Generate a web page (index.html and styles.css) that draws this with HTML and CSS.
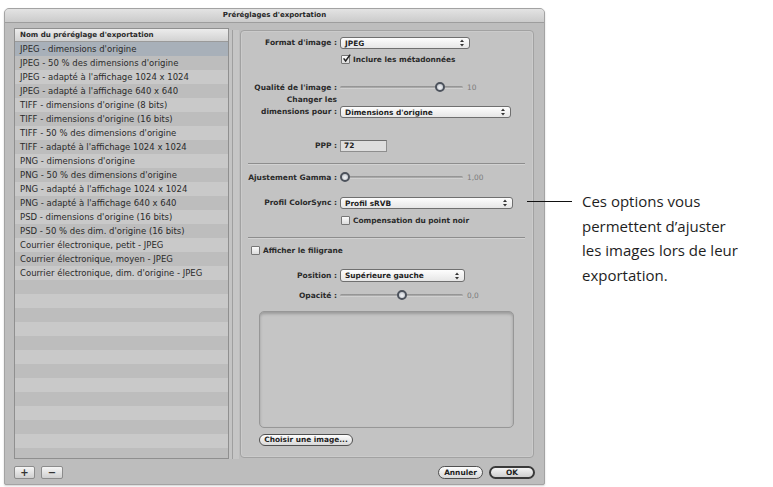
FILE: index.html
```html
<!DOCTYPE html>
<html lang="fr">
<head>
<meta charset="utf-8">
<title>Préréglages d'exportation</title>
<link rel="stylesheet" href="styles.css">
</head>
<body>
<div class="page">
  <div class="window">
    <div class="titlebar">Préréglages d'exportation</div>
    <div class="content">
      <div class="list">
        <div class="list-head">Nom du préréglage d'exportation</div>
        <div class="item sel">JPEG - dimensions d'origine</div>
        <div class="item">JPEG - 50 % des dimensions d'origine</div>
        <div class="item">JPEG - adapté à l'affichage 1024 x 1024</div>
        <div class="item">JPEG - adapté à l'affichage 640 x 640</div>
        <div class="item">TIFF - dimensions d'origine (8 bits)</div>
        <div class="item">TIFF - dimensions d'origine (16 bits)</div>
        <div class="item">TIFF - 50 % des dimensions d'origine</div>
        <div class="item">TIFF - adapté à l'affichage 1024 x 1024</div>
        <div class="item">PNG - dimensions d'origine</div>
        <div class="item">PNG - 50 % des dimensions d'origine</div>
        <div class="item">PNG - adapté à l'affichage 1024 x 1024</div>
        <div class="item">PNG - adapté à l'affichage 640 x 640</div>
        <div class="item">PSD - dimensions d'origine (16 bits)</div>
        <div class="item">PSD - 50 % des dim. d'origine (16 bits)</div>
        <div class="item">Courrier électronique, petit - JPEG</div>
        <div class="item">Courrier électronique, moyen - JPEG</div>
        <div class="item">Courrier électronique, dim. d'origine - JPEG</div>
        <div class="item"></div><div class="item"></div><div class="item"></div>
        <div class="item"></div><div class="item"></div><div class="item"></div>
        <div class="item"></div><div class="item"></div><div class="item"></div>
        <div class="item"></div><div class="item"></div><div class="item"></div>
        <div class="item"></div>
      </div>
      <div class="divider"></div>
      <div class="panel">
        <div class="frow r-format">
          <span class="lbl">Format d'image :</span>
          <div class="popup w-format"><span>JPEG</span><svg class="arrows" viewBox="0 0 4 8" width="4" height="8"><polygon points="0,3 2,0.6 4,3"/><polygon points="0,5 2,7.4 4,5"/></svg></div>
        </div>
        <div class="crow r-meta">
          <span class="cb"><svg viewBox="0 0 9 9" width="9" height="9"><path d="M1.6 4.4 L3.6 7 L8.2 0.6" /></svg></span>
          <span class="ctext">Inclure les métadonnées</span>
        </div>
        <div class="frow r-quality">
          <span class="lbl">Qualité de l'image :</span>
          <div class="slider"><div class="track"></div><div class="knob" style="left:100px"></div></div>
          <span class="val">10</span>
        </div>
        <div class="frow r-size">
          <span class="lbl two">Changer les<br>dimensions pour :</span>
          <div class="popup w-wide"><span>Dimensions d'origine</span><svg class="arrows" viewBox="0 0 4 8" width="4" height="8"><polygon points="0,3 2,0.6 4,3"/><polygon points="0,5 2,7.4 4,5"/></svg></div>
        </div>
        <div class="frow r-ppp">
          <span class="lbl">PPP :</span>
          <div class="field">72</div>
        </div>
        <div class="sep s1"></div>
        <div class="frow r-gamma">
          <span class="lbl">Ajustement Gamma :</span>
          <div class="slider"><div class="track"></div><div class="knob" style="left:5px"></div></div>
          <span class="val">1,00</span>
        </div>
        <div class="frow r-profile">
          <span class="lbl">Profil ColorSync :</span>
          <div class="popup w-wide2"><span>Profil sRVB</span><svg class="arrows" viewBox="0 0 4 8" width="4" height="8"><polygon points="0,3 2,0.6 4,3"/><polygon points="0,5 2,7.4 4,5"/></svg></div>
        </div>
        <div class="crow r-comp">
          <span class="cb"></span>
          <span class="ctext">Compensation du point noir</span>
        </div>
        <div class="sep s2"></div>
        <div class="crow r-wm">
          <span class="cb"></span>
          <span class="ctext">Afficher le filigrane</span>
        </div>
        <div class="frow r-pos">
          <span class="lbl">Position :</span>
          <div class="popup w-pos"><span>Supérieure gauche</span><svg class="arrows" viewBox="0 0 4 8" width="4" height="8"><polygon points="0,3 2,0.6 4,3"/><polygon points="0,5 2,7.4 4,5"/></svg></div>
        </div>
        <div class="frow r-opa">
          <span class="lbl">Opacité :</span>
          <div class="slider"><div class="track"></div><div class="knob" style="left:62px"></div></div>
          <span class="val">0,0</span>
        </div>
        <div class="well"></div>
        <div class="btn b-choose">Choisir une image...</div>
      </div>
    </div>
    <div class="footer">
      <div class="pm">
        <div class="sq">+</div>
        <div class="sq">−</div>
      </div>
      <div class="actions">
        <div class="btn b-cancel">Annuler</div>
        <div class="btn b-ok">OK</div>
      </div>
    </div>
  </div>
  <div class="callout">Ces options vous<br>permettent d’ajuster<br>les images lors de leur<br>exportation.</div>
</div>
</body>
</html>
```

FILE: styles.css
```css
* { box-sizing: border-box; }
html, body { margin: 0; padding: 0; }
body {
  width: 773px; height: 487px; overflow: hidden;
  background: #ffffff;
  font-family: "DejaVu Sans", "Noto Sans", sans-serif;
  color: #1f1f1f;
}
.page { display: flex; align-items: flex-start; }

.window {
  margin: 8px 0 0 4px;
  width: 541px; height: 477px;
  background: #bdbdbd;
  border: 1px solid #a3a3a3;
  border-radius: 5px 5px 2px 2px;
  display: flex; flex-direction: column;
  box-shadow: 0 1px 2px rgba(0,0,0,0.18);
}
.titlebar {
  height: 14px; flex: none;
  background: linear-gradient(#e3e3e3, #cbcbcb);
  border-bottom: 1px solid #9d9d9d;
  border-radius: 4px 4px 0 0;
  text-align: center;
  font-weight: bold; font-size: 7px; line-height: 13px;
  color: #262626;
}
.content {
  display: flex; flex: none;
  padding: 5px 10px 0 9px;
  height: 436px;
}

/* list */
.list {
  width: 215px; height: 431px; flex: none;
  border: 1px solid #8f8f8f;
  background: #c9c9c9;
  overflow: hidden;
}
.list-head {
  height: 13px;
  background: linear-gradient(#ececec, #d2d2d2);
  border-bottom: 1px solid #9a9a9a;
  font-weight: bold; font-size: 7.1px; line-height: 12px;
  padding-left: 5px;
  color: #2a2a2a;
}
.item {
  height: 14px; line-height: 14px;
  padding-left: 5px;
  font-size: 8.5px;
  white-space: nowrap;
  background: #c9c9c9;
  color: #2b2b2b;
}
.item:nth-child(odd) { background: #bdbdbd; }
.item.sel { background: #a8b0b9; }

.divider {
  width: 11px; flex: none;
  margin-top: 2px; height: 429px;
  background: linear-gradient(to right, #c4c4c4 0, #c4c4c4 3px, #9f9f9f 3px, #9f9f9f 4px, #c6c6c6 4px, #c6c6c6 10px, #bdbdbd 10px);
}

/* panel */
.panel {
  width: 294px; height: 428px; flex: none;
  margin-top: 2px;
  border: 1px solid #a2a2a2;
  border-radius: 4px;
  background: #c3c3c3;
  box-shadow: inset 0 0 0 1px #cbcbcb;
  padding-top: 6px;
  display: flex; flex-direction: column;
}
.frow { display: flex; align-items: center; flex: none; }
.crow { display: flex; align-items: center; flex: none; padding-left: 100px; }
.lbl {
  width: 96px; flex: none; text-align: right;
  font-weight: bold; font-size: 7.5px; line-height: 12px;
  color: #2a2a2a; white-space: nowrap;
}
.ctext { font-weight: bold; font-size: 7.4px; margin-left: 3px; color: #2a2a2a; white-space: nowrap; }

.popup {
  margin-left: 3px; height: 12px;
  border: 1px solid #6f6f6f;
  border-radius: 3px;
  background: linear-gradient(#fdfdfd, #e6e6e6);
  display: flex; align-items: center; justify-content: space-between;
  padding: 0 5px 0 4px;
  font-weight: bold; font-size: 7.4px;
  color: #222;
}
.arrows { fill: #333; display: block; }
.w-format { width: 130px; }
.w-wide { width: 171px; }
.w-wide2 { width: 173px; }
.w-pos { width: 125px; }

.cb {
  width: 9px; height: 9px; flex: none;
  border: 1px solid #767676;
  border-radius: 1px;
  background: linear-gradient(#fbfbfb, #dcdcdc);
  position: relative;
}
.cb svg { position: absolute; left: 0; top: -2px; fill: none; stroke: #222; stroke-width: 1.5; }

.slider { margin-left: 3px; width: 123px; height: 11px; position: relative; flex: none; }
.track {
  position: absolute; left: 0; right: 0; top: 4px; height: 3px;
  border-radius: 2px;
  background: linear-gradient(#8c8c8c, #a9a9a9 50%, #e4e4e4);
}
.knob {
  position: absolute; top: 0; width: 10px; height: 10px;
  margin-left: -5px;
  border-radius: 50%;
  border: 2px solid #4c525c;
  background: radial-gradient(circle at 50% 60%, #f2f4f7, #b8bcc3);
}
.val { margin-left: 4px; font-size: 7.4px; color: #7c7c7c; }

.field {
  margin-left: 3px; width: 47px; height: 12px;
  border: 1px solid #8e8e8e; border-top-color: #6d6d6d;
  background: #dedede;
  font-weight: bold; font-size: 7.4px; line-height: 10px;
  padding-left: 3px; color: #222;
}
.sep {
  height: 1px; flex: none;
  margin-left: 7px; margin-right: 8px;
  background: #8d8d8d;
  box-shadow: 0 1px 0 #d2d2d2;
}

.r-format { height: 12px; }
.r-meta { height: 10px; margin-top: 5px; }
.r-quality { height: 11px; margin-top: 18px; }
.r-size { height: 24px; margin-top: 1px; align-items: flex-end; }
.r-ppp { height: 12px; margin-top: 22px; }
.s1 { margin-top: 11px; }
.r-gamma { height: 11px; margin-top: 8px; }
.r-profile { height: 12px; margin-top: 14px; }
.r-comp { height: 10px; margin-top: 6px; }
.s2 { margin-top: 12px; }
.r-wm { height: 10px; margin-top: 7px; padding-left: 10px; }
.r-pos { height: 13px; margin-top: 14px; }
.r-pos .popup { height: 13px; }
.r-opa { height: 11px; margin-top: 8px; }

.well {
  flex: none;
  margin: 10px 0 0 18px;
  width: 255px; height: 117px;
  border: 1px solid #979797;
  border-radius: 5px;
  background: #c5c5c5;
  box-shadow: inset 0 2px 3px rgba(0,0,0,0.22);
}
.btn {
  height: 12px; flex: none;
  border: 1px solid #505050;
  border-radius: 7px;
  background: linear-gradient(#fefefe, #d8d8d8);
  font-weight: bold; font-size: 7.4px; line-height: 10px;
  text-align: center; color: #222;
}
.b-choose { margin: 6px 0 0 18px; width: 94px; }

.footer {
  flex: none;
  display: flex; justify-content: space-between; align-items: flex-start;
  padding: 7px 9px 0 9px;
}
.pm { display: flex; gap: 6px; }
.sq {
  width: 21px; height: 13px;
  border: 1px solid #8c8c8c;
  border-radius: 2px;
  background: linear-gradient(#f6f6f6, #cfcfcf);
  text-align: center;
  font-weight: bold; font-size: 10px; line-height: 11px;
  color: #333;
}
.sq + .sq { width: 22px; }
.actions { display: flex; gap: 6px; }
.b-cancel { width: 45px; height: 13px; line-height: 11px; }
.b-ok { width: 46px; height: 13px; line-height: 9px; border: 2px solid #3a3a3a; background: linear-gradient(#f4f4f4, #cfcfcf); }

.callout {
  position: relative;
  margin: 189px 0 0 37px;
  font-family: "Open Sans", "Lato", sans-serif;
  font-size: 15px; line-height: 24.5px;
  color: #1e1e1e;
  white-space: nowrap;
}
.callout::before {
  content: "";
  position: absolute;
  left: -55px; top: 12px;
  width: 45px; height: 1px;
  background: #111;
}
```
